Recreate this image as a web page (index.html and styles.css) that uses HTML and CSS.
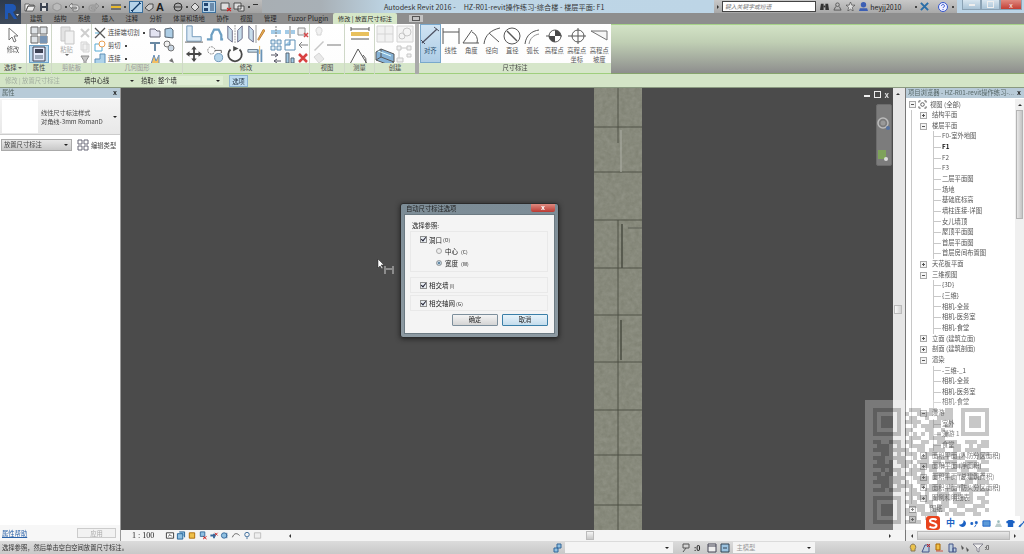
FILE: index.html
```html
<!DOCTYPE html>
<html lang="zh-CN">

<head>
    <meta charset="UTF-8">
    <title>Autodesk Revit 2016</title>
    <link rel="stylesheet" href="styles.css">
</head>

<body>
    <div class="app">
        <div class="top">
            <div class="app-btn">
                <svg width="21" height="24" viewBox="0 0 21 24"><path d="M5 19V4h6c4 0 5 2 5 4s-1 3-3 4l4 7h-3l-4-6H8v6z" fill="#1f57b4"/><path d="M16 14h3l-1.500 2z" fill="#ddd"/></svg>
            </div>
            <div class="top-right">
                <div class="title-row">
                    <div class="qat">
                        <svg class="q" viewBox="0 0 12 10"><path d="M1 2h4l1 1h4v1H4L2 9H1zM4 4h7L9 9H2z" fill="#eee" stroke="#444" stroke-width=".7"/></svg>
                        <svg class="q q-save" viewBox="0 0 12 10"><path d="M2 1h8v8H2z" fill="#3d4450"/><path d="M4 1h4v3H4zM4 6h4v3H4z" fill="#ddd"/></svg>
                        <svg class="q" viewBox="0 0 12 10"><path d="M2 3l4-2 4 2v4L6 9 2 7z" fill="#bbb" stroke="#888" stroke-width=".7"/></svg>
                        <span class="dot"></span>
                        <svg class="q" viewBox="0 0 12 10"><path d="M1 4l3-3v2h4c2 0 3 1 3 3s-1 3-3 3H5V7h3c1 0 1-2 0-2H4v2z" fill="#ddd" stroke="#555" stroke-width=".6"/></svg>
                        <span class="dot"></span>
                        <svg class="q q-wide" viewBox="0 0 12 10"><path d="M11 4L8 1v2H4C2 3 1 4 1 6s1 3 3 3h3V7H4C3 7 3 5 4 5h4v2z" fill="#aaa" stroke="#888" stroke-width=".6"/></svg>
                        <span class="dot"></span>
                        <svg class="q q-ruler" viewBox="0 0 12 10"><path d="M1 3h10M1 7h10" stroke="#333"/><path d="M1 4h10v2H1z" fill="#e8b92e"/></svg>
                        <span class="dot"></span>
                        <svg class="q q-on" viewBox="0 0 12 10"><path d="M2 9L10 1" stroke="#123a66" stroke-width="1.300"/><path d="M1 8l2 2M9 0l2 2" stroke="#123a66"/></svg>
                        <svg class="q" viewBox="0 0 12 10"><path d="M2 6l4-4h4v4L6 9z" fill="#ccc" stroke="#333" stroke-width=".8"/></svg>
                        <span class="qat-a">A</span>
                        <svg class="q q-gap" viewBox="0 0 12 10"><circle cx="6" cy="5" r="4" fill="#aaa" stroke="#333"/><path d="M2 5h8" stroke="#333"/></svg>
                        <span class="dot"></span>
                        <svg class="q" viewBox="0 0 12 10"><path d="M6 1l4 4-4 4-4-4z" fill="#ddd" stroke="#333" stroke-width=".8"/></svg>
                        <svg class="q q-on q-tight" viewBox="0 0 12 10"><path d="M1 1h4v3H1zM1 6h4v3H1z" fill="#23456e"/><path d="M7 2h4M7 4h4M7 6h4M7 8h4" stroke="#23456e"/></svg>
                        <svg class="q q-gap" viewBox="0 0 12 10"><path d="M1 1h8v7H1z" fill="#ddd" stroke="#333" stroke-width=".8"/><path d="M7 6l4 3m0-3L7 9" stroke="#c22" stroke-width="1.200"/></svg>
                        <svg class="q" viewBox="0 0 12 10"><path d="M1 1h7v6H1zM5 4h6v5H5z" fill="#ddd" stroke="#333" stroke-width=".8"/></svg>
                        <span class="dot dot-gap"></span>
                        <span class="qat-more"></span>
                    </div>
                    <div class="doc-title">Autodesk Revit 2016 -<span class="doc-name">HZ-R01-revit操作练习-综合楼 - 楼层平面: F1</span></div>
                    <div class="info">
                        <span class="info-arrow"></span>
                        <span class="search">键入关键字或短语</span>
                        <svg class="i" viewBox="0 0 10 10"><path d="M1 2h3v7H0zM6 2h3l1 7H6z" fill="#333"/><path d="M4 4h2v2H4z" fill="#333"/></svg>
                        <svg class="i" viewBox="0 0 10 10"><circle cx="5" cy="3" r="2" fill="none" stroke="#555"/><path d="M3 5L1 9h8L7 5" fill="none" stroke="#555"/></svg>
                        <svg class="i" viewBox="0 0 10 10"><path d="M5 0l1.500 3.500H10L7 6l1 4-3-2-3 2 1-4-3-2.500h3.500z" fill="#ddd" stroke="#444" stroke-width=".7"/></svg>
                        <svg class="i" viewBox="0 0 10 10"><circle cx="5" cy="3" r="3" fill="#3c5fb4"/><path d="M0 10l1-3h8l1 3z" fill="#3c5fb4"/></svg>
                        <span class="user">heyjj2010</span>
                        <span class="dot"></span>
                        <svg class="i" viewBox="0 0 10 10"><path d="M1 1l8 8M9 1L1 9" stroke="#2a6ea8" stroke-width="2.200"/></svg>
                        <svg class="i help" viewBox="0 0 10 10"><circle cx="5" cy="5" r="4.500" fill="#eef" stroke="#35c"/><path d="M3.500 4c0-2 3-2 3 0 0 1-1.500 1-1.500 2M5 7v1" fill="none" stroke="#35c"/></svg>
                        <span class="dot"></span>
                    </div>
                    <div class="win">
                        <span class="win-btn"><i class="w-min"></i></span>
                        <span class="win-btn"><i class="w-max"></i></span>
                        <span class="win-btn win-close">x</span>
                    </div>
                </div>
                <div class="tabs">
                    <span>建筑</span><span>结构</span><span>系统</span><span>插入</span><span>注释</span><span>分析</span><span>体量和场地</span><span>协作</span><span>视图</span><span>管理</span><span class="tab-fuzor">Fuzor Plugin</span>
                    <span class="tab-on">修改 | 放置尺寸标注</span>
                    <span class="tab-mini"><i></i></span>
                </div>
            </div>
        </div>

        <div class="ribbon">
            <div class="panel" style="width:27px">
                <div class="panel-body big-row">
                    <div class="big"><svg width="14" height="16" viewBox="0 0 14 16"><path d="M3 1v12l3-3 2 5 2-1-2-5h4z" fill="#fff" stroke="#555"/></svg><span>修改</span></div>
                </div>
                <div class="panel-label">选择 <i class="caret"></i></div>
            </div>
            <div class="panel" style="width:25px">
                <div class="panel-body col-center">
                    <svg width="20" height="18" viewBox="0 0 20 18"><path d="M2 1h7v7H2zM11 1h7v7h-7zM2 10h7v7H2zM11 10h7v7h-7z" fill="#d8dde2" stroke="#444"/><path d="M11 10h7v7h-7z" fill="#5c7ea5"/></svg>
                    <div class="prop-on"><svg width="14" height="16" viewBox="0 0 14 16"><path d="M1 1h12v14H1z" fill="#eef" stroke="#223"/><path d="M3 3h8v4H3z" fill="#223"/><path d="M3 10h8M3 12h8" stroke="#456"/></svg></div>
                </div>
                <div class="panel-label">属性</div>
            </div>
            <div class="panel" style="width:40px">
                <div class="panel-body clip">
                    <div class="big paste"><svg width="18" height="20" viewBox="0 0 18 20"><path d="M3 2h9v14H3z" fill="#ddd" stroke="#bbb"/><path d="M7 6h9v13H7z" fill="#eee" stroke="#bbb"/></svg><span>粘贴</span><i class="caret"></i></div>
                    <div class="small-col">
                        <svg class="s" viewBox="0 0 12 12"><path d="M2 2l8 8M10 2l-8 8" stroke="#c4c4c4" stroke-width="2"/></svg>
                        <svg class="s" viewBox="0 0 12 12"><path d="M2 1h6v8H2zM4 3h6v8H4z" fill="#eee" stroke="#ccc"/></svg>
                        <svg class="s" viewBox="0 0 12 12"><path d="M2 2h8L7 7v4H5V7z" fill="#bbb" stroke="#777"/></svg>
                    </div>
                </div>
                <div class="panel-label faded">剪贴板</div>
            </div>
            <div class="panel" style="width:91px">
                <div class="panel-body geo">
                    <div class="geo-list">
                        <div class="geo-item"><svg class="s" viewBox="0 0 12 12"><path d="M1 1l10 10M11 1L1 11" stroke="#333" stroke-width="1.300"/><path d="M1 6h4" stroke="#39c"/></svg><span>连接端切割</span><span class="dot"></span></div>
                        <div class="geo-item"><svg class="s" viewBox="0 0 12 12"><path d="M1 4h7v7H1z" fill="#fff" stroke="#39c"/><circle cx="8" cy="4" r="3" fill="#fff" stroke="#e58a2b"/></svg><span>剪切</span><span class="dot"></span></div>
                        <div class="geo-item"><svg class="s" viewBox="0 0 12 12"><path d="M1 6h5V1h5v10H1z" fill="#9cc8e6" stroke="#3c78a8"/></svg><span>连接</span><span class="dot"></span></div>
                    </div>
                    <div class="small-grid two">
                        <svg class="s" viewBox="0 0 12 12"><path d="M1 2h5l2 2h3v6H1z" fill="#dde" stroke="#445"/></svg>
                        <svg class="s" viewBox="0 0 12 12"><path d="M2 2l6-1 2 2v8l-8-1z" fill="#9cc3e0" stroke="#345"/></svg>
                        <svg class="s" viewBox="0 0 12 12"><path d="M1 3h10M6 3v8" stroke="#4a6f8f" stroke-width="2"/></svg>
                        <svg class="s" viewBox="0 0 12 12"><circle cx="4" cy="4" r="3" fill="#eee" stroke="#555"/><circle cx="8" cy="8" r="3" fill="#bcd" stroke="#555"/></svg>
                        <svg class="s" viewBox="0 0 12 12"><path d="M2 11l3-9 2 6 3-6v9z" fill="#f0b040" stroke="#47a"/></svg>
                        <svg class="s" viewBox="0 0 12 12"><path d="M2 2l5 5 2-2 2 5-5-2 1-1-5-5z" fill="#555"/></svg>
                    </div>
                </div>
                <div class="panel-label faded">几何图形</div>
            </div>
            <div class="panel" style="width:127px">
                <div class="panel-body mod">
                    <div class="mod-grid">
                        <svg viewBox="0 0 20 20"><path d="M2 1h6v12h10v5H2z" fill="#d5e6f3" stroke="#4a7ca6"/><path d="M0 19h20" stroke="#333"/></svg>
                        <svg viewBox="0 0 20 20"><path d="M1 16h5v-5l3-6h5l3 6v5h2" fill="none" stroke="#4d8ab5" stroke-width="2.500"/></svg>
                        <svg viewBox="0 0 20 20"><path d="M2 1l5 5v13L2 15zM13 6l5-5v14l-5 4z" fill="#bcd6e8" stroke="#446"/><path d="M10 0v20" stroke="#777" stroke-dasharray="2 1"/></svg>
                        <svg viewBox="0 0 20 20"><path d="M2 1l5 5v13L2 15z" fill="#bcd6e8" stroke="#446"/><path d="M10 0v20" stroke="#777"/><path d="M12 16L18 5l2 1-7 11z" fill="#e3a72f" stroke="#a50"/></svg>
                        <svg viewBox="0 0 20 20"><path d="M10 1l3 4h-2v4h4V7l4 3-4 3v-2h-4v4h2l-3 4-3-4h2v-4H5v2l-4-3 4-3v2h4V5H7z" fill="#222"/></svg>
                        <svg viewBox="0 0 20 20"><circle cx="6" cy="6" r="4" fill="none" stroke="#555" stroke-dasharray="2 1"/><circle cx="14" cy="14" r="4.500" fill="#a6cce6" stroke="#4a7ca6"/><path d="M10 6h7v3" fill="none" stroke="#333"/></svg>
                        <svg viewBox="0 0 20 20"><path d="M5 5a7.500 7.500 0 1 0 10 0" fill="none" stroke="#222" stroke-width="2"/><path d="M8 1l6 3-6 3z" fill="#222"/></svg>
                        <svg viewBox="0 0 20 20"><path d="M1 5h11v3H1z" fill="#bcd6e8" stroke="#456"/><path d="M12 5v14M16 5v14" stroke="#4a7ca6" stroke-width="2"/><path d="M14 1v9" stroke="#e3a72f"/></svg>
                    </div>
                    <div class="small-grid three">
                        <svg class="s" viewBox="0 0 12 12"><path d="M1 4h10v4H1z" fill="#8fc0e2"/><path d="M6 0v12" stroke="#666" stroke-dasharray="2 1"/></svg>
                        <svg class="s" viewBox="0 0 12 12"><path d="M1 4h4v4H1zM7 4h4v4H7z" fill="#8fc0e2"/><path d="M6 0v12" stroke="#666"/></svg>
                        <svg class="s" viewBox="0 0 12 12"><path d="M1 2h7v7H1z" fill="#eee" stroke="#777"/><path d="M7 7l4 4m0-4l-4 4" stroke="#c22" stroke-width="1.500"/></svg>
                        <svg class="s" viewBox="0 0 12 12"><path d="M1 1h4v4H1zM7 1h4v4H7zM1 7h4v4H1zM7 7h4v4H7z" fill="#dbe9f3" stroke="#3c78a8"/></svg>
                        <svg class="s" viewBox="0 0 12 12"><path d="M1 1h10v10H1z" fill="#fff" stroke="#3c78a8"/><path d="M6 1v5H1" fill="#8fc0e2" stroke="#3c78a8"/></svg>
                        <svg class="s" viewBox="0 0 12 12"><path d="M11 6H3M5 3L2 6l3 3" fill="none" stroke="#666"/></svg>
                        <svg class="s" viewBox="0 0 12 12"><path d="M1 3h7M5 1l3 2-3 2M11 9H4M7 7L4 9l3 2" fill="none" stroke="#334"/></svg>
                        <svg class="s" viewBox="0 0 12 12"><path d="M2 1h3v10H2zM7 6h3v5H7z" fill="#8fc0e2" stroke="#345"/></svg>
                        <svg class="s" viewBox="0 0 12 12"><path d="M2 2l8 8M10 2l-8 8" stroke="#d01818" stroke-width="2.500"/></svg>
                    </div>
                </div>
                <div class="panel-label">修改</div>
            </div>
            <div class="panel" style="width:35px">
                <div class="panel-body small-rows">
                    <svg class="s" viewBox="0 0 12 12"><path d="M6 1a3.500 3.500 0 0 1 2 6v2H4V7a3.500 3.500 0 0 1 2-6z" fill="#eee" stroke="#ccc"/></svg>
                    <span class="view-dash"><svg class="s" viewBox="0 0 12 12"><path d="M1 11L10 2l1 1-9 9z" fill="#bbb"/></svg><i></i></span>
                    <svg class="s" viewBox="0 0 12 12"><path d="M1 5l5-4 5 6-5 4z" fill="#e4e4e4" stroke="#ccc"/></svg>
                </div>
                <div class="panel-label">视图</div>
            </div>
            <div class="panel" style="width:30px">
                <div class="panel-body col-center measure">
                    <svg width="20" height="16" viewBox="0 0 20 16"><path d="M1 3h18M1 13h18" stroke="#333"/><path d="M1 6h18v4H1z" fill="#e3b23a"/><path d="M1 1v4M19 1v4" stroke="#333"/></svg>
                    <svg width="22" height="20" viewBox="0 0 22 20"><path d="M1 18h17L9 3z" fill="none" stroke="#333"/><path d="M14 9a8 8 0 0 1 3 8" fill="none" stroke="#333"/></svg>
                </div>
                <div class="panel-label">测量</div>
            </div>
            <div class="panel create" style="width:44px">
                <div class="panel-body create-grid">
                    <svg width="18" height="18" viewBox="0 0 18 18"><path d="M1 1h16v16H1zM9 1v16M1 9h16" fill="#eee" stroke="#ccc"/></svg>
                    <svg width="18" height="18" viewBox="0 0 18 18"><path d="M1 1h16v16H1z" fill="#f2f2f2" stroke="#ccc"/><circle cx="11" cy="7" r="4" fill="none" stroke="#bbb"/><circle cx="6" cy="11" r="3" fill="none" stroke="#bbb"/></svg>
                    <svg width="20" height="20" viewBox="0 0 20 20"><path d="M1 7l5-3 13 5v8l-5 3L1 15z" fill="#6ba2ce" stroke="#333"/><path d="M6 4v8l13 5M6 12l-5 3" fill="none" stroke="#333"/><path d="M3 6l13 5" stroke="#dff"/></svg>
                    <svg width="18" height="18" viewBox="0 0 18 18"><path d="M1 1h4v4H1zM11 1h4v4h-4zM1 13h6v4H1zM11 9h4v3h-4z" fill="#eee" stroke="#bbb"/><path d="M5 3h6M3 5v8" stroke="#bbb"/></svg>
                </div>
                <div class="panel-label">创建</div>
            </div>
            <div class="panel dim">
                <div class="panel-body dim-row">
                    <div class="big dim-on"><svg width="20" height="20" viewBox="0 0 20 20"><path d="M2 17L17 3" stroke="#334" stroke-width="1.200"/><path d="M1 14l4 4M14 1l5 4" stroke="#334"/></svg><span>对齐</span></div>
                    <div class="big"><svg width="18" height="20" viewBox="0 0 18 20"><path d="M1 2v16M17 2v16M1 6h16" fill="none" stroke="#333"/></svg><span>线性</span></div>
                    <div class="big"><svg width="18" height="20" viewBox="0 0 18 20"><path d="M1 17h16M1 17L10 4" fill="none" stroke="#333"/><path d="M10 6a9 9 0 0 1 5 11" fill="none" stroke="#333"/></svg><span>角度</span></div>
                    <div class="big"><svg width="18" height="20" viewBox="0 0 18 20"><path d="M1 18C2 9 8 4 17 2" fill="none" stroke="#333"/><path d="M16 16L6 7" stroke="#333"/></svg><span>径向</span></div>
                    <div class="big"><svg width="18" height="20" viewBox="0 0 18 20"><circle cx="9" cy="10" r="8" fill="none" stroke="#333"/><path d="M4 5l10 10" stroke="#333" stroke-width="1.500"/></svg><span>直径</span></div>
                    <div class="big"><svg width="18" height="20" viewBox="0 0 18 20"><path d="M1 18C2 9 8 5 15 4" fill="none" stroke="#333"/><path d="M5 18C6 12 10 9 15 8" fill="none" stroke="#777"/></svg><span>弧长</span></div>
                    <div class="big wide"><svg width="18" height="20" viewBox="0 0 18 20"><path d="M1 10h16" stroke="#333"/><circle cx="10" cy="10" r="6" fill="#fff" stroke="#333"/><path d="M10 4a6 6 0 0 1 6 6h-6zM10 16a6 6 0 0 1-6-6h6z" fill="#222"/></svg><span>高程点</span></div>
                    <div class="big wide"><svg width="20" height="20" viewBox="0 0 20 20"><circle cx="11" cy="10" r="6" fill="none" stroke="#333"/><path d="M1 10h18M11 2v16" stroke="#333"/></svg><span>高程点<br>坐标</span></div>
                    <div class="big wide"><svg width="18" height="20" viewBox="0 0 18 20"><path d="M1 5l16 9V5z" fill="#f4f4f4" stroke="#555"/></svg><span>高程点<br>坡度</span></div>
                </div>
                <div class="panel-label">尺寸标注</div>
            </div>
            <div class="ribbon-fill"></div>
        </div>

        <div class="options">
            <span class="opt-crumb">修改 | 放置尺寸标注</span>
            <span class="opt-select first">墙中心线<i class="caret dark"></i></span>
            <span class="opt-pick">拾取:</span>
            <span class="opt-select second">整个墙<i class="caret dark"></i></span>
            <span class="opt-btn">选项</span>
        </div>

        <div class="work">
            <div class="props">
                <div class="pane-head">属性<b>x</b></div>
                <div class="type-sel">
                    <div class="type-thumb"></div>
                    <div class="type-name">线性尺寸标注样式<br>对角线-3mm RomanD</div>
                    <i class="caret dark"></i>
                </div>
                <div class="prop-tools">
                    <span class="prop-select">放置尺寸标注<i class="caret dark"></i></span>
                    <svg class="s" viewBox="0 0 12 12"><path d="M1 1h4v4H1zM7 1h4v4H7zM1 7h4v4H1zM7 7h4v4H7z" fill="#fff" stroke="#667"/></svg>
                    <span>编辑类型</span>
                </div>
                <div class="prop-empty"></div>
                <div class="prop-foot">
                    <span class="prop-help">属性帮助</span>
                    <span class="apply">应用</span>
                </div>
            </div>

            <div class="view">
                <div class="view-top">
                    <div class="canvas">
                        <svg class="wall" width="48" height="442" viewBox="0 0 48 442">
                            <filter id="stone" color-interpolation-filters="sRGB" x="0" y="0" width="100%" height="100%"><feTurbulence type="fractalNoise" baseFrequency=".22" numOctaves="3" seed="4"/><feColorMatrix values="0 0 0 0 .44  0 0 0 0 .45  0 0 0 0 .39  .5 .5 0 0 -.25"/></filter>
                            <rect width="48" height="442" fill="#8f9184"/>
                            <rect width="48" height="442" filter="url(#stone)"/>
                            <g stroke="#4a4c42" fill="none" stroke-width=".9">
                                <path d="M0 39h48M0 84h48M0 132h48M0 180h48M0 227h48M0 274h48M0 322h48M0 367h48M0 417h48"/>
                                <path d="M24 0v55M24 132v48M24 180v47M24 227v95M24 322v45M24 367v50M24 417v25"/>
                                <path d="M28 136v44M27 232v40" stroke-width="1.500"/>
                                <path d="M27 42v42" stroke="#a8aaa0" stroke-width="1.200"/>
                                <path d="M34 140h14" stroke="#5a5c52"/>
                            </g>
                        </svg>
                        <div class="view-ctl"><i class="w-min"></i><i class="w-max"></i><b>x</b></div>
                        <div class="nav-bar">
                            <svg width="14" height="22" viewBox="0 0 14 22"><circle cx="6" cy="7" r="5" fill="none" stroke="#bbb" stroke-width="1.500"/><circle cx="6" cy="7" r="2.500" fill="#999"/><circle cx="11" cy="12" r="2" fill="#5672a0"/></svg>
                            <span class="nav-dash"></span>
                            <svg width="14" height="16" viewBox="0 0 14 16"><path d="M1 2h8v9H1z" fill="#7ea25a"/><circle cx="9" cy="11" r="2" fill="#ddd"/></svg>
                            <span class="nav-dash"></span>
                        </div>
                        <div class="pointer">
                            <svg width="20" height="18" viewBox="0 0 20 18"><path d="M1 1v9l2-2 2 3 1-1-2-3h3z" fill="#fff" stroke="#222" stroke-width=".5"/><path d="M8 8v8M16 8v8M8 11h8" fill="none" stroke="#8c8c8c" stroke-width="2"/></svg>
                        </div>

                        <div class="dialog">
                            <div class="dlg-title"><span>自动尺寸标注选项</span><b>x</b></div>
                            <div class="dlg-body">
                                <div class="dlg-head">选择参照:</div>
                                <div class="dlg-group tall">
                                    <label class="dlg-check"><i class="chk"></i>洞口 <small>(O)</small></label>
                                    <label class="dlg-radio"><i class="rad"></i>中心 <small>(C)</small></label>
                                    <label class="dlg-radio"><i class="rad on"></i>宽度 <small>(W)</small></label>
                                </div>
                                <div class="dlg-group short">
                                    <label class="dlg-check"><i class="chk"></i>相交墙 <small>(I)</small></label>
                                </div>
                                <div class="dlg-group">
                                    <label class="dlg-check"><i class="chk"></i>相交轴网 <small>(G)</small></label>
                                </div>
                                <div class="dlg-btns">
                                    <span class="dlg-btn">确定</span>
                                    <span class="dlg-btn primary">取消</span>
                                </div>
                            </div>
                        </div>
                    </div>
                    <div class="vscroll"><i class="arrow-up"></i><span class="vthumb"></span></div>
                </div>
                <div class="view-bar">
                    <span class="scale">1 : 100</span>
                    <svg class="v" viewBox="0 0 10 10"><path d="M1 2h8v6H1z" fill="#fff" stroke="#333"/><path d="M3 6l2-2 2 2" stroke="#333" fill="none"/></svg>
                    <svg class="v" viewBox="0 0 10 10"><path d="M1 3h6v6H1zM3 1h6v6" fill="#8fc0e2" stroke="#1f5f94"/></svg>
                    <svg class="v" viewBox="0 0 10 10"><path d="M2 2h6v6H2z" fill="#eec04a" stroke="#a60"/></svg>
                    <svg class="v" viewBox="0 0 10 10"><path d="M2 1h5v5H2z" fill="#8fc0e2" stroke="#369"/><path d="M5 6l4 3m0-3L5 9" stroke="#c22"/></svg>
                    <svg class="v" viewBox="0 0 10 10"><path d="M1 5h6M5 3v5" stroke="#369" stroke-width="2"/><path d="M6 2l3 3m0-3L6 5" stroke="#c22"/></svg>
                    <svg class="v" viewBox="0 0 10 10"><circle cx="4" cy="5" r="3" fill="#8fc0e2" stroke="#369"/><path d="M7 2v6" stroke="#369"/></svg>
                    <svg class="v" viewBox="0 0 10 10"><path d="M1 7c2-5 5-5 8-2" fill="none" stroke="#555"/></svg>
                    <svg class="v" viewBox="0 0 10 10"><circle cx="5" cy="4" r="2.500" fill="none" stroke="#369"/><path d="M5 7v2" stroke="#369"/></svg>
                    <svg class="v" viewBox="0 0 10 10"><path d="M1 2h7v6H1z" fill="#eee" stroke="#bbb"/></svg>
                    <i class="arrow-left"></i>
                    <span class="hthumb"></span>
                    <i class="arrow-right"></i>
                </div>
            </div>

            <div class="browser">
                <div class="pane-head">项目浏览器 - HZ-R01-revit操作练习-...<b>x</b></div>
                <div class="tree-wrap">
                    <div class="tree">
                        <div class="t root"><i class="box minus"></i><svg class="root-ic" viewBox="0 0 10 10"><path d="M1 3V1h2M7 1h2v2M9 7v2H7M3 9H1V7" fill="none" stroke="#555"/><circle cx="5" cy="5" r="2" fill="none" stroke="#555"/></svg>视图 (全部)</div>
                        <div class="t l1"><i class="box plus"></i>结构平面</div>
                        <div class="t l1"><i class="box minus"></i>楼层平面</div>
                        <div class="t l2">F0-室外地图</div>
                        <div class="t l2 cur">F1</div>
                        <div class="t l2">F2</div>
                        <div class="t l2">F3</div>
                        <div class="t l2">二层平面图</div>
                        <div class="t l2">场地</div>
                        <div class="t l2">基础底标高</div>
                        <div class="t l2">墙柱连接-详图</div>
                        <div class="t l2">女儿墙顶</div>
                        <div class="t l2">屋顶平面图</div>
                        <div class="t l2">首层平面图</div>
                        <div class="t l2">首层房间布置图</div>
                        <div class="t l1"><i class="box plus"></i>天花板平面</div>
                        <div class="t l1"><i class="box minus"></i>三维视图</div>
                        <div class="t l2">{3D}</div>
                        <div class="t l2">{三维}</div>
                        <div class="t l2">相机-全景</div>
                        <div class="t l2">相机-医务室</div>
                        <div class="t l2">相机-食堂</div>
                        <div class="t l1"><i class="box plus"></i>立面 (建筑立面)</div>
                        <div class="t l1"><i class="box plus"></i>剖面 (建筑剖面)</div>
                        <div class="t l1"><i class="box minus"></i>渲染</div>
                        <div class="t l2">-三维-_1</div>
                        <div class="t l2">相机-全景</div>
                        <div class="t l2">相机-医务室</div>
                        <div class="t l2">相机-食堂</div>
                        <div class="t l1"><i class="box minus"></i>漫游</div>
                        <div class="t l2">室外</div>
                        <div class="t l2">漫游 1</div>
                        <div class="t l2">食堂</div>
                        <div class="t l1"><i class="box plus"></i>面积平面 (人防分区面积)</div>
                        <div class="t l1"><i class="box plus"></i>面积平面 (净面积)</div>
                        <div class="t l1"><i class="box plus"></i>面积平面 (总建筑面积)</div>
                        <div class="t l1"><i class="box plus"></i>面积平面 (防火分区面积)</div>
                        <div class="t l1"><i class="box plus"></i>图例和明细表</div>
                        <div class="t root"><i class="box plus"></i>图纸</div>
                        <div class="t root"><i class="box plus"></i></div>
                    </div>
                    <div class="tree-scroll"><i class="arrow-up"></i><span class="tree-thumb"></span></div>
                </div>
                <div class="tree-hbar"><i class="arrow-left"></i><span class="tree-hthumb"></span><i class="arrow-right"></i></div>
            </div>
        </div>

        <div class="status">
            <span class="status-text">选择参照，然后单击空白空间放置尺寸标注。</span>
            <svg class="st first" viewBox="0 0 10 10"><path d="M1 5h4v4H1zM4 1h4v4H4z" fill="#8fc0e2" stroke="#369"/></svg>
            <span class="st-select wide"><i class="caret dark"></i></span>
            <svg class="st" viewBox="0 0 10 10"><path d="M2 1h6v4H2zM5 5L2 9" fill="none" stroke="#555"/></svg>
            <span class="st-count">:0</span>
            <svg class="st gap" viewBox="0 0 10 10"><path d="M1 1h8v8H1z" fill="#eee" stroke="#445"/><path d="M1 3h8" stroke="#445"/></svg>
            <svg class="st" viewBox="0 0 10 10"><path d="M1 1h8v8H1z" fill="#9cc3e0" stroke="#345"/><path d="M3 5h4" stroke="#345"/></svg>
            <span class="st-select model">主模型<i class="caret dark"></i></span>
            <svg class="st far" viewBox="0 0 10 10"><path d="M5 1a3 3 0 0 1 2 5v2H3V6a3 3 0 0 1 2-5z" fill="#eac24a" stroke="#875"/></svg>
            <svg class="st" viewBox="0 0 10 10"><path d="M1 9l3-7h4v7z" fill="#bcd" stroke="#458"/><path d="M6 1l3 3m0-3L6 4" stroke="#c22"/></svg>
            <svg class="st" viewBox="0 0 10 10"><path d="M2 1h4v6H2z" fill="#eec04a" stroke="#a60"/><path d="M2 8h7" stroke="#c54"/></svg>
            <svg class="st" viewBox="0 0 10 10"><path d="M2 1h4v8H2zM6 5h3v4H6z" fill="#bcd" stroke="#458"/></svg>
            <svg class="st" viewBox="0 0 10 10"><path d="M1 2l3 3-2 2zM6 4l3 3-2 2z" fill="#555"/></svg>
            <svg class="st" viewBox="0 0 10 10"><path d="M0 1h10L6 5v4L4 8V5z" fill="#eee" stroke="#667" stroke-width=".7"/></svg>
            <span class="st-count small">:0</span>
        </div>

        <!-- 水印二维码 -->
        <svg class="qr" width="130" height="130" viewBox="-2 -2 32.500 32.500">
            <rect x="-2" y="-2" width="32.500" height="32.500" fill="#fff" opacity=".26"/>
            <g fill="none" stroke="#000" stroke-opacity=".22">
                <path d="M.5 .5h6v6h-6zM22.500 .5h6v6h-6zM.5 22.500h6v6h-6z"/>
                <path d="M2 3.500h3M24 3.500h3M2 25.500h3" stroke-width="3"/>
                <path d="M9 .5h3M14 .5h2M18 .5h2M8 1.500h1M11 1.500h4M17 1.500h3M9 2.500h2M13 2.500h1M16 2.500h4M8 3.500h4M14 3.500h3M19 3.500h1M10 4.500h1M12 4.500h5M18 4.500h2M8 5.500h2M13 5.500h2M17 5.500h1M8 6.500h1M10 6.500h1M12 6.500h1M14 6.500h1M16 6.500h1M18 6.500h1"/>
                <path d="M9 7.500h3M14 7.500h4M0 8.500h2M4 8.500h3M8 8.500h2M12 8.500h2M16 8.500h5M23 8.500h3M27 8.500h2M1 9.500h3M6 9.500h1M9 9.500h4M15 9.500h2M19 9.500h3M24 9.500h1M26 9.500h3M0 10.500h4M5 10.500h4M11 10.500h2M14 10.500h4M20 10.500h2M23 10.500h4"/>
                <path d="M2 11.500h2M6 11.500h1M8 11.500h3M13 11.500h3M18 11.500h3M22 11.500h1M25 11.500h4M0 12.500h3M5 12.500h3M10 12.500h1M12 12.500h2M16 12.500h3M20 12.500h3M26 12.500h2M1 13.500h2M4 13.500h1M6 13.500h4M11 13.500h3M15 13.500h2M18 13.500h3M23 13.500h3M27 13.500h2"/>
                <path d="M0 14.500h5M7 14.500h2M10 14.500h1M12 14.500h4M17 14.500h1M20 14.500h4M25 14.500h2M2 15.500h1M4 15.500h3M9 15.500h4M14 15.500h2M18 15.500h3M22 15.500h2M26 15.500h3M0 16.500h2M3 16.500h2M6 16.500h1M8 16.500h3M12 16.500h1M15 16.500h4M21 16.500h5M27 16.500h1M1 17.500h3M5 17.500h3M10 17.500h4M15 17.500h1M18 17.500h2M22 17.500h1M24 17.500h3"/>
                <path d="M0 18.500h4M5 18.500h2M8 18.500h1M11 18.500h3M16 18.500h5M23 18.500h2M26 18.500h3M2 19.500h2M6 19.500h4M12 19.500h1M14 19.500h3M19 19.500h1M21 19.500h3M25 19.500h2M0 20.500h3M4 20.500h3M9 20.500h2M13 20.500h4M18 20.500h3M22 20.500h7"/>
                <path d="M8 21.500h4M13 21.500h1M16 21.500h3M20 21.500h2M24 21.500h1M28 21.500h1M9 22.500h1M11 22.500h3M15 22.500h4M20 22.500h1M22 22.500h1M24 22.500h1M26 22.500h2M8 23.500h3M13 23.500h2M17 23.500h2M20 23.500h5M27 23.500h2M9 24.500h4M14 24.500h1M16 24.500h3M21 24.500h2M25 24.500h3M8 25.500h1M11 25.500h2M15 25.500h3M19 25.500h2M23 25.500h3M28 25.500h1M8 26.500h3M12 26.500h4M18 26.500h1M20 26.500h3M25 26.500h2M9 27.500h2M13 27.500h1M15 27.500h3M19 27.500h5M26 27.500h3M8 28.500h4M14 28.500h2M17 28.500h2M21 28.500h3M25 28.500h3"/>
            </g>
        </svg>

        <div class="ime">
            <svg class="ime-logo" viewBox="0 0 14 14"><rect width="14" height="14" rx="3" fill="#e8431d"/><path d="M10.500 4C9 2.500 4 2.500 4 5s6.500 1.500 6.500 4.500S5 12 3.500 10.500" fill="none" stroke="#fff" stroke-width="2"/></svg>
            <span class="ime-zh">中</span>
            <svg class="ime-ic" viewBox="0 0 10 10"><path d="M6 1a4 4 0 1 1-5 5 4 4 0 0 0 5-5z" fill="#1c62c4"/></svg>
            <svg class="ime-ic" viewBox="0 0 10 10"><path d="M1 4h2v2H1zM6 3h2v2H6zM7 6L5 9" stroke="#1c62c4" fill="#1c62c4"/></svg>
            <svg class="ime-ic" viewBox="0 0 10 10"><path d="M1 2h8v6H1z" fill="#5d9ad8" stroke="#1c62c4"/></svg>
            <svg class="ime-ic" viewBox="0 0 10 10"><circle cx="5" cy="3" r="1.500" fill="#9bb"/><path d="M3 5l-2 4h8L7 5z" fill="#bcc"/></svg>
            <svg class="ime-ic" viewBox="0 0 10 10"><path d="M3 1L0 3l1 2 1-.5V9h6V4.500L9 5l1-2-3-2H3z" fill="#1c62c4"/></svg>
            <svg class="ime-ic" viewBox="0 0 10 10"><path d="M9 1L6 3v1L1 8l1 1 4-5h1l2-3z" fill="#1c62c4" stroke="#1c62c4"/></svg>
        </div>
    </div>
</body>

</html>
```

FILE: styles.css
```css
/* 整体 */
body {
    margin: 0;
    background: #4a4a4a;
    font-family: "Noto Sans CJK SC", "Noto Sans", sans-serif;
    font-size: 6.3px;
    color: #333;
}

.app {
    position: relative;
    width: 1024px;
    height: 554px;
    overflow: hidden;
    display: flex;
    flex-direction: column;
    filter: blur(.4px);
}

svg {
    display: block;
    flex: none;
}

i,
b {
    font-style: normal;
}

.caret {
    display: inline-block;
    width: 0;
    height: 0;
    border-left: 2px solid transparent;
    border-right: 2px solid transparent;
    border-top: 2px solid #666;
    vertical-align: middle;
}

.caret.dark {
    border-top-color: #222;
}

.dot {
    width: 2px;
    height: 2px;
    background: #444;
    flex: none;
    margin: 0 3px;
}

/* 顶部 */
.top {
    display: flex;
    height: 24px;
}

.app-btn {
    width: 21px;
    height: 24px;
    background: linear-gradient(#2d3a4d, #3e4a5b);
}

.top-right {
    flex: 1;
    display: flex;
    flex-direction: column;
    min-width: 0;
}

.title-row {
    height: 13px;
    display: flex;
    align-items: center;
    background: linear-gradient(90deg, #a8a8a8 0, #a8b0b6 300px, #bed6e6 370px, #bcd4e6 100%);
}

.qat {
    width: 241px;
    height: 13px;
    flex: none;
    display: flex;
    align-items: center;
    padding-left: 3px;
    box-sizing: border-box;
    background: linear-gradient(#bdbdbd, #a2a2a2);
}

.q {
    width: 12px;
    height: 10px;
    margin-right: 1px;
}

.q-save {
    margin-left: 1px;
}

.qat .dot {
    margin: 0 1px;
}

.q-wide {
    margin-left: 3px;
}

.q-ruler {
    margin-left: 5px;
}

.q-on {
    background: #b5d3ea;
    outline: 1px solid #3c6f9c;
    margin-left: 3px;
}

.q-on.q-tight {
    margin-left: 1px;
}

.q-gap {
    margin-left: 4px;
}

.qat-a {
    font: bold 11px "Liberation Sans", sans-serif;
    color: #222;
    width: 12px;
    line-height: 12px;
}

.qat .dot-gap {
    margin-left: 2px;
}

.qat-more {
    width: 5px;
    height: 4px;
    border-top: 1px solid #333;
    margin-left: 2px;
}

.doc-title {
    width: 452px;
    flex: none;
    padding-left: 122px;
    box-sizing: border-box;
    font-size: 7.200px;
    color: #333;
    white-space: nowrap;
    overflow: hidden;
}

.doc-name {
    margin-left: 8px;
}

.info {
    width: 243px;
    height: 13px;
    flex: none;
    display: flex;
    align-items: center;
    background: linear-gradient(#c8c8c8, #a8a8a8);
    box-sizing: border-box;
    padding-left: 3px;
}

.info-arrow {
    border-left: 2px solid #333;
    border-top: 2px solid transparent;
    border-bottom: 2px solid transparent;
}

.search {
    width: 95px;
    height: 11px;
    margin: 0 4px 0 3px;
    background: #fff;
    border: 1px solid #444;
    box-sizing: border-box;
    padding-left: 2px;
    font-style: italic;
    font-size: 5.800px;
    line-height: 9px;
    color: #777;
}

.i {
    width: 9px;
    height: 9px;
    margin-right: 4px;
}

.user {
    font-size: 7px;
    width: 42px;
    margin-left: -2px;
    color: #222;
}

.help {
    width: 10px;
    height: 10px;
    margin: 0 1px 0 5px;
}

.win {
    display: flex;
    flex: 1;
    justify-content: flex-end;
    padding-right: 2px;
    height: 11px;
    align-self: flex-start;
}

.win-btn {
    width: 19px;
    height: 10px;
    display: flex;
    align-items: center;
    justify-content: center;
    background: linear-gradient(#d8e6f0, #a9c3d6);
    border: 1px solid #8ba2b4;
    border-top: 0;
    box-sizing: border-box;
}

.win-close {
    width: 22px;
    background: linear-gradient(#e08a80, #c23f35);
    color: #fff;
    font-size: 7px;
    line-height: 8px;
}

.w-min {
    width: 6px;
    height: 2px;
    background: #eee;
    display: block;
}

.w-max {
    width: 5px;
    height: 5px;
    border: 1px solid #eee;
    display: block;
}

.tabs {
    flex: 1;
    display: flex;
    align-items: center;
    gap: 11.300px;
    padding-left: 9px;
    background: #8e8e8e;
    color: #262626;
    font-size: 6.300px;
    line-height: 11px;
}

.tab-fuzor {
    font-size: 7px;
    width: 38px;
    white-space: nowrap;
}

.tab-on {
    width: 64px;
    margin-left: -4px;
    text-align: center;
    background: #d6e7c8;
    white-space: nowrap;
    border-radius: 2px 2px 0 0;
    font-size: 6.200px;
}

.tab-mini {
    width: 14px;
    height: 7px;
    margin-left: 1px;
    background: #c2c2c2;
    display: flex;
    align-items: center;
    justify-content: center;
}

.tab-mini i {
    width: 6px;
    height: 3px;
    border: 1px solid #555;
}

/* 功能区 */
.ribbon {
    height: 50px;
    display: flex;
    background: #fff;
}

.panel {
    flex: none;
    display: flex;
    flex-direction: column;
    box-sizing: border-box;
    border-right: 1px solid #cfd8c8;
}

.panel-body {
    height: 40px;
    background: linear-gradient(#fff, #fdfdfd);
    overflow: hidden;
}

.panel-body svg {
    opacity: .82;
}

.panel-label {
    height: 10px;
    line-height: 10px;
    text-align: center;
    background: #d6e6ca;
    border-bottom: 1px solid #9fcf7d;
    box-sizing: content-box;
    color: #444;
    white-space: nowrap;
}

.panel-label.faded {
    color: #999;
}

.big {
    display: flex;
    flex-direction: column;
    align-items: center;
    line-height: 9px;
    text-align: center;
    flex: none;
    color: #555;
    white-space: nowrap;
}

.big-row {
    padding-top: 3px;
    box-sizing: border-box;
}

.big-row .big svg {
    margin-bottom: 2px;
}

.col-center {
    display: flex;
    flex-direction: column;
    align-items: center;
    padding-top: 2px;
    box-sizing: border-box;
}

.prop-on {
    width: 20px;
    height: 19px;
    margin-top: 1px;
    display: flex;
    align-items: center;
    justify-content: center;
    background: #bcd9ef;
    border: 1px solid #6ea3cb;
    box-sizing: border-box;
}

.clip {
    display: flex;
    padding-top: 1px;
    box-sizing: border-box;
}

.paste {
    width: 25px;
    padding-left: 2px;
    color: #aaa;
}

.small-col {
    display: flex;
    flex-direction: column;
    gap: 1.500px;
    padding-top: 2px;
}

.s {
    width: 12px;
    height: 12px;
}

.geo {
    display: flex;
    padding: 2px 0 0 2px;
    box-sizing: border-box;
}

.geo-list {
    width: 55px;
}

.geo-item {
    height: 13px;
    display: flex;
    align-items: center;
    gap: 2px;
    white-space: nowrap;
    color: #444;
}

.geo-item .dot {
    margin-left: 2px;
}

.small-grid {
    display: grid;
    gap: 1px 2px;
    align-content: start;
}

.small-grid.two {
    grid-template-columns: 12px 12px;
    padding-top: 1px;
}

.small-grid.three {
    grid-template-columns: 12px 12px 12px;
    column-gap: 1.500px;
    padding-top: 2px;
}

.mod {
    display: flex;
    gap: 4px;
    padding-left: 1px;
}

.mod-grid {
    display: grid;
    grid-template-columns: repeat(4, 20.500px);
    grid-auto-rows: 20px;
    align-items: center;
    justify-items: center;
}

.mod-grid svg {
    width: 18px;
    height: 18px;
}

.small-rows {
    display: flex;
    flex-direction: column;
    gap: 1px;
    padding: 2px 0 0 3px;
    box-sizing: border-box;
}

.view-dash {
    display: flex;
    align-items: center;
    gap: 2px;
}

.view-dash i {
    width: 14px;
    height: 2px;
    background: #bbb;
}

.measure {
    gap: 4px;
}

.create {
    border-right: 4px solid #a9a9a9;
}

.create-grid {
    display: grid;
    grid-template-columns: 20px 20px;
    justify-items: center;
    align-content: start;
    gap: 2px 0;
    padding-top: 1px;
}

.dim {
    width: 192px;
    border-right: 0;
}

.dim-row {
    display: flex;
    padding-left: 1px;
}

.dim-row .big {
    width: 20.500px;
    padding-top: 2px;
    box-sizing: border-box;
}

.dim-row .big.wide {
    width: 22.500px;
}

.dim-row .dim-on {
    height: 39px;
    padding-top: 1px;
    background: linear-gradient(#cfe3f3, #aecde6);
    border: 1px solid #79a8cc;
    color: #29506f;
}

.ribbon-fill {
    flex: 1;
    background: linear-gradient(#d3e3c6 0, #c0cfb4 35%, #8c8c8c 100%);
    border-top: 1px solid #a7d38a;
    box-shadow: inset 0 -1px 0 #86a36d;
}

/* 选项栏 */
.options {
    height: 14px;
    display: flex;
    align-items: center;
    background: #d4e5c7;
    border-bottom: 1px solid #8a9a80;
    box-sizing: border-box;
}

.opt-crumb {
    color: #a2aea0;
    width: 84px;
    padding-left: 5px;
    box-sizing: border-box;
    white-space: nowrap;
}

.opt-select {
    display: flex;
    align-items: center;
    justify-content: space-between;
    box-sizing: border-box;
    color: #222;
}

.opt-select.first {
    width: 50px;
}

.opt-pick {
    margin-left: 7px;
    width: 16px;
    white-space: nowrap;
}

.opt-select.second {
    width: 66px;
    padding: 0 3px 0 1px;
    background: #dfeed4;
}

.opt-btn {
    margin-left: 6px;
    width: 19px;
    height: 12px;
    text-align: center;
    line-height: 11px;
    background: #bedcf0;
    border: 1px solid #8cb3d0;
    box-sizing: border-box;
    color: #234;
}

/* 工作区 */
.work {
    flex: 1;
    min-height: 0;
    display: flex;
}

.props {
    width: 121px;
    flex: none;
    display: flex;
    flex-direction: column;
    background: #fff;
    border-right: 1px solid #999;
    box-sizing: border-box;
}

.pane-head {
    height: 10px;
    line-height: 10px;
    padding: 0 3px 0 2px;
    display: flex;
    justify-content: space-between;
    background: #b8cbd8;
    color: #566;
    white-space: nowrap;
}

.pane-head b {
    color: #222;
    font-size: 7px;
    line-height: 9px;
}

.type-sel {
    height: 35px;
    margin-top: 1px;
    padding: 0 3px 0 2px;
    display: flex;
    align-items: center;
    background: linear-gradient(#f4f4f4, #e8e8e8);
    border-bottom: 1px solid #ccc;
}

.type-thumb {
    width: 36px;
    height: 33px;
    background: #fff;
    flex: none;
}

.type-name {
    flex: 1;
    line-height: 9px;
    padding-left: 3px;
    color: #444;
    font-size: 6.200px;
    white-space: nowrap;
}

.prop-tools {
    height: 12px;
    margin-top: 4px;
    display: flex;
    align-items: center;
    gap: 2px;
    padding-left: 1px;
    white-space: nowrap;
    color: #444;
}

.prop-select {
    width: 71px;
    height: 12px;
    line-height: 12px;
    padding: 0 3px 0 2px;
    margin-right: 3px;
    box-sizing: border-box;
    display: flex;
    align-items: center;
    justify-content: space-between;
    background: linear-gradient(#e8e8e8, #c8c8c8);
    border: 1px solid #aaa;
}

.prop-empty {
    flex: 1;
}

.prop-foot {
    height: 16px;
    display: flex;
    align-items: center;
    justify-content: space-between;
    padding: 0 4px 0 2px;
    background: #f7f7f7;
}

.prop-help {
    color: #2a62a8;
    text-decoration: underline;
}

.apply {
    width: 39px;
    height: 10px;
    line-height: 9px;
    text-align: center;
    border: 1px solid #ccc;
    box-sizing: border-box;
    color: #aaa;
    background: #f2f2f2;
}

.view {
    flex: 1;
    min-width: 0;
    display: flex;
    flex-direction: column;
}

.view-top {
    flex: 1;
    min-height: 0;
    display: flex;
}

.canvas {
    position: relative;
    flex: 1;
    background: #4b4b4b;
    overflow: hidden;
}

.wall {
    position: absolute;
    left: 473px;
    top: 0;
}

.view-ctl {
    position: absolute;
    right: 4px;
    top: 3px;
    display: flex;
    align-items: center;
    gap: 4px;
    color: #ddd;
}

.view-ctl b {
    font-size: 8px;
    line-height: 7px;
}

.view-ctl .w-min {
    margin-top: 2px;
}

.nav-bar {
    position: absolute;
    left: 755px;
    top: 16px;
    width: 16px;
    height: 62px;
    box-sizing: border-box;
    padding: 11px 1px 0;
    display: flex;
    flex-direction: column;
    align-items: center;
    background: #7c7c7c;
    border-radius: 2px;
    border: 1px solid #6c6c6c;
}

.nav-dash {
    width: 3px;
    height: 1px;
    background: #555;
    margin: 4px 0 6px;
}

.pointer {
    position: absolute;
    left: 256px;
    top: 170px;
}

.vscroll {
    width: 12px;
    flex: none;
    position: relative;
    background: #e6e6e6;
}

.arrow-up {
    position: absolute;
    left: 3px;
    top: 5px;
    border-left: 2px solid transparent;
    border-right: 2px solid transparent;
    border-bottom: 2px solid #333;
}

.vthumb {
    position: absolute;
    left: 1px;
    top: 217px;
    width: 8px;
    height: 9px;
    background: linear-gradient(90deg, #f8f8f8, #d2d2d2);
    border: 1px solid #bbb;
    box-sizing: border-box;
}

.view-bar {
    height: 11px;
    display: flex;
    align-items: center;
    background: #f4f4f4;
}

.scale {
    font: 8px "Liberation Serif", serif;
    width: 44px;
    padding-left: 11px;
    box-sizing: border-box;
    color: #222;
    white-space: nowrap;
}

.v {
    width: 10px;
    height: 9px;
    margin-right: 1px;
}

.arrow-left {
    border-right: 2px solid #333;
    border-top: 2px solid transparent;
    border-bottom: 2px solid transparent;
    margin-left: 25px;
}

.hthumb {
    width: 8px;
    height: 9px;
    margin-left: 295px;
    background: linear-gradient(#f4f4f4, #c8c8c8);
    border: 1px solid #bbb;
    box-sizing: border-box;
}

.arrow-right {
    border-left: 2px solid #333;
    border-top: 2px solid transparent;
    border-bottom: 2px solid transparent;
    margin-left: 295px;
}

/* 项目浏览器 */
.browser {
    width: 119px;
    flex: none;
    display: flex;
    flex-direction: column;
    background: #fff;
    border-left: 1px solid #777;
    box-sizing: border-box;
}

.tree-wrap {
    flex: 1;
    min-height: 0;
    display: flex;
    margin-top: 1px;
}

.tree {
    flex: 1;
    overflow: hidden;
    padding-top: .5px;
    color: #555;
}

.t {
    position: relative;
    height: 10.650px;
    line-height: 10.650px;
    white-space: nowrap;
    display: flex;
    align-items: center;
}

.t.root {
    padding-left: 24px;
}

.t.l1 {
    padding-left: 26px;
    background: linear-gradient(#c8c8c8, #c8c8c8) 5px 0 / 1px 100% no-repeat;
}

.t.l2 {
    padding-left: 36px;
    background:
        linear-gradient(#c8c8c8, #c8c8c8) 27px 50% / 8px 1px no-repeat,
        linear-gradient(#c8c8c8, #c8c8c8) 27px 0 / 1px 100% no-repeat,
        linear-gradient(#c8c8c8, #c8c8c8) 5px 0 / 1px 100% no-repeat;
}

.t.cur {
    font-weight: 700;
    color: #111;
}

.root-ic {
    width: 9px;
    height: 9px;
    position: absolute;
    left: 12px;
}

.box {
    position: absolute;
    width: 5px;
    height: 5px;
    border: 1px solid #aaa;
    background: #f4f4f4;
}

.l1 .box {
    left: 14px;
}

.root .box {
    left: 3px;
}

.box::before {
    content: "";
    position: absolute;
    left: 1px;
    top: 2px;
    width: 3px;
    height: 1px;
    background: #555;
}

.plus::after {
    content: "";
    position: absolute;
    left: 2px;
    top: 1px;
    width: 1px;
    height: 3px;
    background: #555;
}

.tree-scroll {
    width: 9px;
    flex: none;
    position: relative;
    background: #f0f0f0;
}

.tree-thumb {
    position: absolute;
    left: 1px;
    top: 11px;
    width: 7px;
    height: 109px;
    background: linear-gradient(90deg, #e8e8e8, #c4c4c4);
    border: 1px solid #b4b4b4;
    box-sizing: border-box;
}

.tree-hbar {
    height: 11px;
    display: flex;
    align-items: center;
    background: #f0f0f0;
    padding-left: 5px;
}

.tree-hbar .arrow-left {
    margin-left: 0;
}

.tree-hthumb {
    width: 93px;
    height: 9px;
    margin-left: 4px;
    background: linear-gradient(#e8e8e8, #c8c8c8);
    border: 1px solid #bbb;
    box-sizing: border-box;
}

.tree-hbar .arrow-right {
    margin-left: 4px;
}

/* 对话框 */
.dialog {
    position: absolute;
    left: 279px;
    top: 115px;
    width: 159px;
    height: 135px;
    box-sizing: border-box;
    padding: 0 3px 3px;
    display: flex;
    flex-direction: column;
    background: linear-gradient(#7c8c96, #8d9aa2);
    border: 1px solid #2c2c2c;
    border-radius: 3px;
    box-shadow: 0 1px 5px #222;
}

.dlg-title {
    height: 8px;
    padding: 1px 0 0 2px;
    display: flex;
    justify-content: space-between;
    color: #222;
    line-height: 8px;
    flex: none;
}

.dlg-title b {
    width: 24px;
    height: 8px;
    margin-top: -1px;
    background: linear-gradient(#dd8a80, #bb3a32);
    color: #fff;
    text-align: center;
    font-size: 7px;
    line-height: 6px;
    border-radius: 0 0 2px 2px;
}

.dlg-body {
    flex: 1;
    margin-top: 1px;
    padding: 6px 6px 0 5px;
    background: #f4f4f4;
    border: 1px solid #6c7a82;
    color: #222;
}

.dlg-head {
    height: 9px;
    line-height: 9px;
    margin-left: 2px;
    margin-bottom: 1px;
}

.dlg-group {
    height: 16px;
    margin-bottom: 3px;
    padding-left: 9px;
    box-sizing: border-box;
    border: 1px solid #e9e9e9;
    display: flex;
    flex-direction: column;
    justify-content: center;
}

.dlg-group.tall {
    height: 41px;
    margin-bottom: 5px;
    justify-content: flex-start;
    padding-top: 2px;
}

.dlg-group.short {
    margin-bottom: 2px;
}

.dlg-group small {
    font-size: 5px;
}

.dlg-check,
.dlg-radio {
    display: flex;
    align-items: center;
    gap: 1px;
    height: 11px;
    white-space: nowrap;
    font-size: 6.500px;
}

.dlg-radio {
    padding-left: 16px;
    height: 12px;
    gap: 3px;
}

.chk {
    width: 7px;
    height: 7px;
    margin-right: 1px;
    background: #e8edf2;
    border: 1px solid #8e8f8f;
    box-sizing: border-box;
    position: relative;
}

.chk::after {
    content: "";
    position: absolute;
    left: 1px;
    top: -1px;
    width: 2px;
    height: 4px;
    border-right: 1px solid #223;
    border-bottom: 1px solid #223;
    transform: rotate(40deg);
}

.rad {
    width: 6px;
    height: 6px;
    border-radius: 50%;
    background: #eee;
    border: 1px solid #aaa;
    box-sizing: border-box;
}

.rad.on {
    background: #3d6c8e;
    box-shadow: inset 0 0 0 1px #d8e6ee;
}

.dlg-btns {
    display: flex;
    justify-content: flex-end;
    gap: 4px;
    margin-top: 2px;
}

.dlg-btn {
    width: 46px;
    height: 12px;
    line-height: 10px;
    text-align: center;
    box-sizing: border-box;
    background: linear-gradient(#f4f4f4, #d4d4d4);
    border: 1px solid #7d8f9c;
    border-radius: 1px;
}

.dlg-btn.primary {
    background: linear-gradient(#e8f4fb, #c4dcec);
    border-color: #3b7fa8;
}

/* 状态栏 */
.status {
    height: 13px;
    display: flex;
    align-items: center;
    background: linear-gradient(#dcdcdc, #c8c8c8);
    color: #333;
}

.status-text {
    width: 553px;
    padding-left: 2px;
    box-sizing: border-box;
    white-space: nowrap;
}

.st {
    width: 10px;
    height: 10px;
    margin-right: 3px;
}

.st.first {
    margin-right: 2px;
}

.st.gap {
    margin-left: 7px;
}

.st.far {
    margin-left: 93px;
}

.st-select {
    height: 11px;
    box-sizing: border-box;
    display: flex;
    align-items: center;
    justify-content: space-between;
    padding: 0 4px 0 3px;
    background: #f4f4f4;
    color: #999;
}

.st-select.wide {
    width: 108px;
    margin-right: 8px;
    justify-content: flex-end;
}

.st-select.model {
    width: 82px;
}

.st-count {
    font-weight: 700;
    font-size: 7px;
    color: #222;
}

.st-count.small {
    margin-left: -2px;
    font-weight: 400;
    font-size: 6px;
}

/* 水印和输入法 */
.qr {
    position: absolute;
    left: 865px;
    top: 400px;
}

.ime {
    position: absolute;
    left: 926px;
    top: 516px;
    width: 94px;
    height: 14px;
    display: flex;
    align-items: center;
    gap: 3px;
    background: #fff;
}

.ime-logo {
    width: 14px;
    height: 14px;
    margin-right: 3px;
}

.ime-zh {
    color: #1c62c4;
    font-size: 9px;
    font-weight: 700;
    line-height: 10px;
}

.ime-ic {
    width: 9px;
    height: 9px;
}
```
